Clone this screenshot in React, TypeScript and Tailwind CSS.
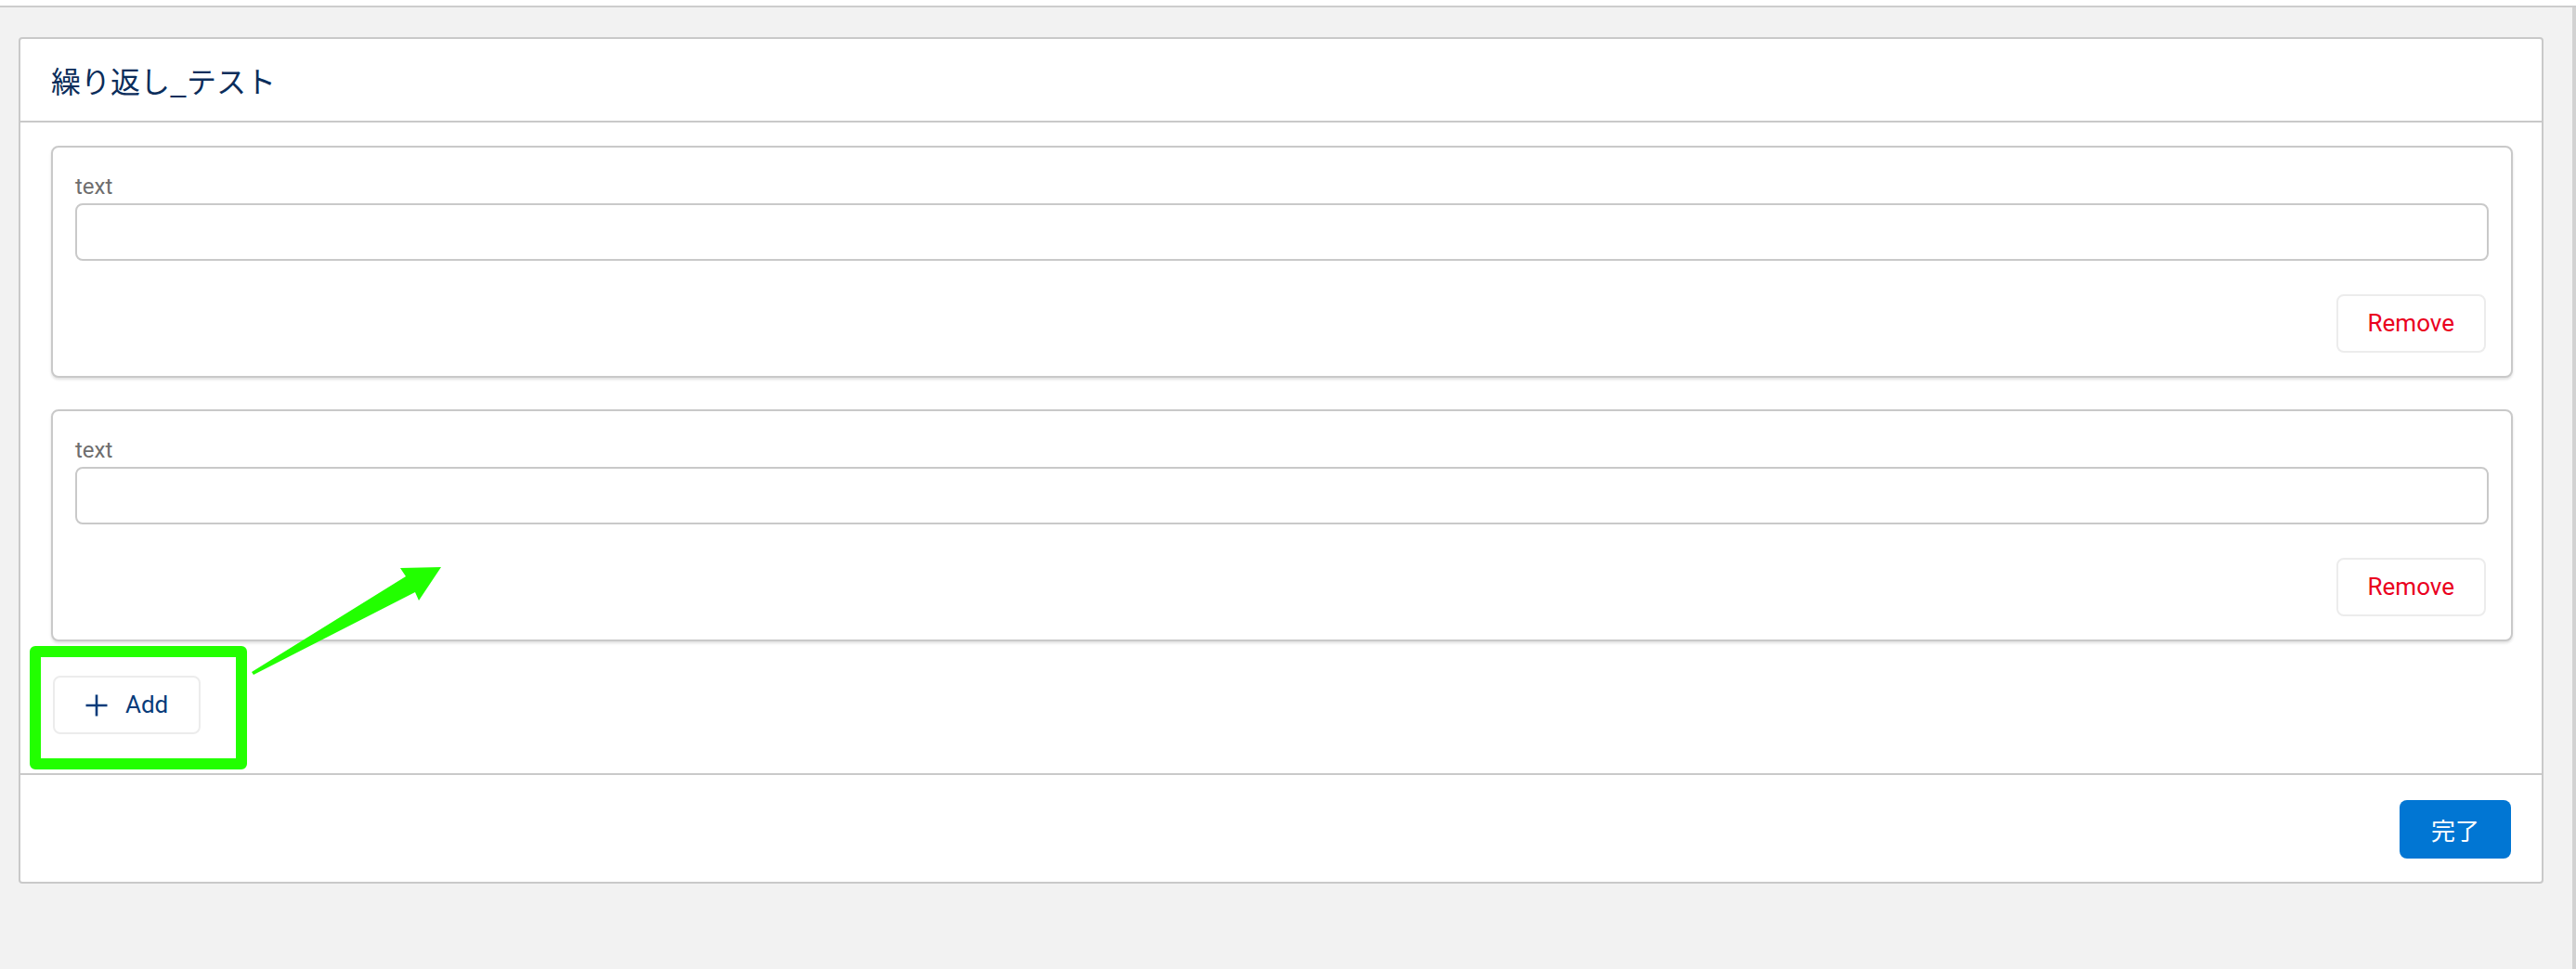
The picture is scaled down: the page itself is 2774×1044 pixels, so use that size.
import { useState } from 'react';

function PlusIcon() {
  return (
    <svg width="24" height="24" viewBox="0 0 24 24" className="shrink-0">
      <path d="M12 0.5V23.5M0.5 12H23.5" stroke="#073b7a" strokeWidth="2.6" fill="none" />
    </svg>
  );
}

function RepeatItem() {
  const [value, setValue] = useState('');
  return (
    <div className="w-full rounded-[8px] border-2 border-[#c9c9c9] bg-white px-[24px] pt-[24px] pb-[25px] shadow-[0_2px_3px_rgba(0,0,0,0.12)]">
      <div className="h-[36px] text-[24px] leading-[36px] text-[#6e6e6e]">text</div>
      <input
        value={value}
        onChange={(e) => setValue(e.target.value)}
        className="block h-[62px] w-full rounded-[8px] border-2 border-[#c9c9c9] bg-white px-[16px] text-[26px] outline-none"
      />
      <div className="mt-[36px] flex justify-end pr-[3px]">
        <button className="h-[63px] rounded-[8px] border-2 border-[#ececec] bg-white px-[32px] text-[26px] text-[#ea001e]">
          Remove
        </button>
      </div>
    </div>
  );
}

export default function App() {
  const [items] = useState([1, 2]);

  return (
    <div className="relative h-[1044px] w-[2774px] overflow-hidden bg-white pt-[6px] font-['Roboto','Noto_Sans_CJK_JP',sans-serif]">
      <div className="flex h-[1038px] border-t-2 border-[#cdcdcd] bg-[#f2f2f2]">
        <div className="flex-1 pt-[32px] pl-[20px] pr-[31px]">
          <div className="rounded-[4px] border-2 border-[#c9c9c9] bg-white">
            {/* header */}
            <div className="flex h-[90px] items-center border-b-2 border-[#c9c9c9] px-[33px]">
              <h1 className="font-['Noto_Sans_CJK_JP',sans-serif] text-[32px] font-normal text-[#0b2d5b]">
                繰り返し_テスト
              </h1>
            </div>

            {/* body */}
            <div className="pt-[25px] pb-[42px] pl-[33px] pr-[31px]">
              <div className="flex flex-col gap-[34px]">
                {items.map((i) => (
                  <RepeatItem key={i} />
                ))}
              </div>
              <button className="mt-[37px] ml-[2px] flex h-[63px] items-center gap-[19px] rounded-[8px] border-2 border-[#ececec] bg-white px-[33px] text-[26px] text-[#073b7a]">
                <PlusIcon />
                <span>Add</span>
              </button>
            </div>

            {/* footer */}
            <div className="flex justify-end border-t-2 border-[#c9c9c9] pt-[27px] pb-[25px] pr-[33px]">
              <button className="h-[63px] w-[120px] rounded-[8px] bg-[#0176d3] font-['Noto_Sans_CJK_JP',sans-serif] text-[26px] text-white">
                完了
              </button>
            </div>
          </div>
        </div>
        <div className="w-[4px] bg-[#d2d2d2]" />
      </div>

      {/* annotation */}
      <div className="pointer-events-none absolute top-[696px] left-[32px] h-[133px] w-[234px] rounded-[6px] border-[12px] border-[#22ff00]" />
      <svg
        className="pointer-events-none absolute top-0 left-0"
        width="2774"
        height="1044"
        viewBox="0 0 2774 1044"
      >
        <polygon
          points="271,724 437,621 431,612 475,611 451,647 447,638 273,727"
          fill="#22ff00"
        />
      </svg>
    </div>
  );
}
